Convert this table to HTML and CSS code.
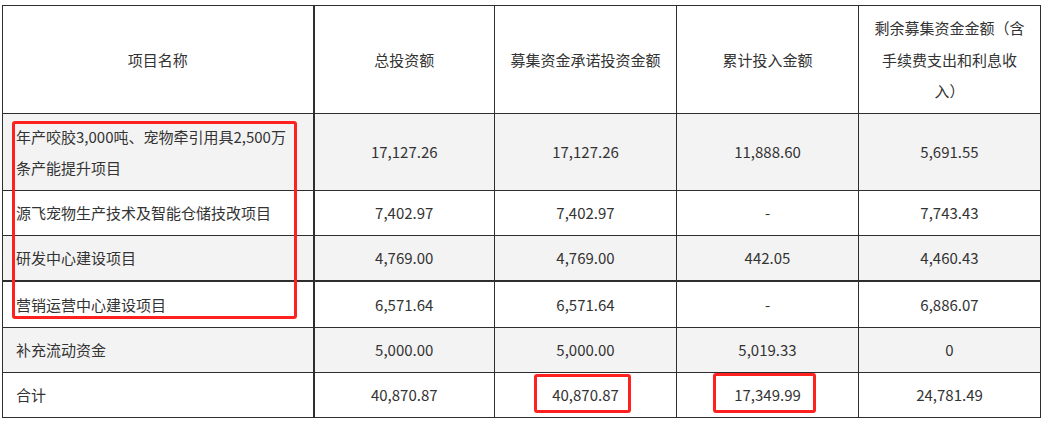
FILE: index.html
```html
<!DOCTYPE html>
<html lang="zh-CN">
<head>
<meta charset="utf-8">
<link rel="stylesheet" href="styles.css">
</head>
<body>
<div class="page">
  <table class="fund">
    <colgroup>
      <col class="c1"><col class="c2"><col class="c3"><col class="c4"><col class="c5">
    </colgroup>
    <tr class="head">
      <td class="name center">项目名称</td>
      <td>总投资额</td>
      <td>募集资金承诺投资金额</td>
      <td>累计投入金额</td>
      <td>剩余募集资金金额（含手续费支出和利息收入）</td>
    </tr>
    <tr class="alt r1">
      <td class="name">年产咬胶3,000吨、宠物牵引用具2,500万条产能提升项目</td>
      <td>17,127.26</td>
      <td>17,127.26</td>
      <td>11,888.60</td>
      <td>5,691.55</td>
    </tr>
    <tr class="row">
      <td class="name">源飞宠物生产技术及智能仓储技改项目</td>
      <td>7,402.97</td>
      <td>7,402.97</td>
      <td>-</td>
      <td>7,743.43</td>
    </tr>
    <tr class="alt row thick">
      <td class="name">研发中心建设项目</td>
      <td>4,769.00</td>
      <td>4,769.00</td>
      <td>442.05</td>
      <td>4,460.43</td>
    </tr>
    <tr class="row r4">
      <td class="name">营销运营中心建设项目</td>
      <td>6,571.64</td>
      <td>6,571.64</td>
      <td>-</td>
      <td>6,886.07</td>
    </tr>
    <tr class="alt row">
      <td class="name">补充流动资金</td>
      <td>5,000.00</td>
      <td>5,000.00</td>
      <td>5,019.33</td>
      <td>0</td>
    </tr>
    <tr class="row">
      <td class="name">合计</td>
      <td>40,870.87</td>
      <td>40,870.87</td>
      <td>17,349.99</td>
      <td>24,781.49</td>
    </tr>
  </table>
  <div class="mark m1"></div>
  <div class="mark m2"></div>
  <div class="mark m3"></div>
</div>
</body>
</html>
```
FILE: styles.css
```css
html, body {
  margin: 0;
  padding: 0;
  background: #ffffff;
}
.page {
  position: relative;
  width: 1046px;
  height: 421px;
  padding: 5px 0 0 2px;
  box-sizing: border-box;
}
.fund {
  border-collapse: collapse;
  table-layout: fixed;
  width: 1039px;
  font-family: "Microsoft YaHei", "Noto Sans CJK SC", sans-serif;
  font-size: 15px;
  line-height: 31.5px;
  color: #333333;
}
.c1 { width: 311px; }
.c2 { width: 181px; }
.c3 { width: 182px; }
.c4 { width: 182px; }
.c5 { width: 182px; }
.fund td {
  border: 1px solid #2e2e2e;
  padding: 6px 13px;
  text-align: center;
  vertical-align: middle;
  word-break: break-all;
}
.fund td.name {
  text-align: left;
  border-right: 2px solid #2e2e2e;
}
.fund td.name.center {
  text-align: center;
}
.head td { height: 95px; }
.r1 td { height: 64px; }
.row td { height: 32px; }
.r4 td { height: 33px; }
.thick td { border-bottom: 2px solid #2e2e2e; }
.alt td { background: #f3f3f3; }
.mark {
  position: absolute;
  border: 3px solid #ff2020;
  border-radius: 3px;
  box-sizing: border-box;
}
.m1 { left: 12px; top: 121px; width: 285px; height: 198px; }
.m2 { left: 534px; top: 374px; width: 97px; height: 39px; }
.m3 { left: 713px; top: 373px; width: 103px; height: 40px; }
```
